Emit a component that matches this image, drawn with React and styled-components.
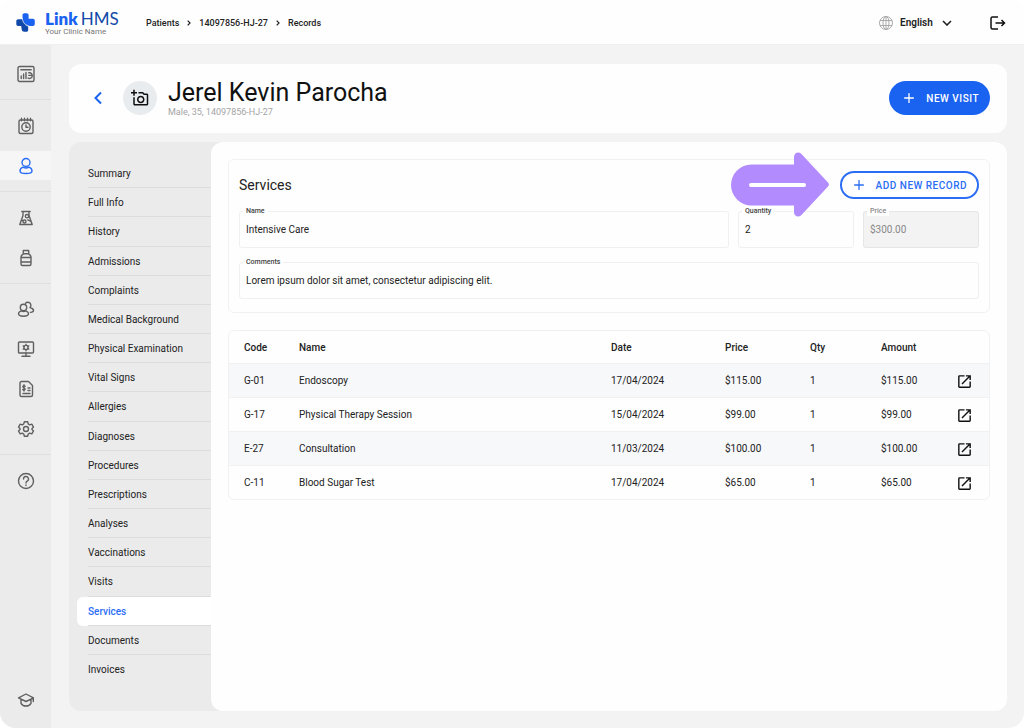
import { useState } from "react";
import styled, { createGlobalStyle } from "styled-components";
import { MdOpenInNew, MdOutlineAddAPhoto } from "react-icons/md";

const GlobalStyle = createGlobalStyle`
  * {
    box-sizing: border-box;
  }

  body {
    margin: 0;
    background: #fff;
    color: #222;
    font-family: Roboto, "Liberation Sans", sans-serif;
    font-size: 10px;
    line-height: 14px;
  }

  button, input, select {
    font-family: inherit;
  }
`;

const Page = styled.div`
  display: flex;
  flex-direction: column;
  min-height: 100vh;
  background: #f3f3f3;
  border-radius: 16px;
  overflow: hidden;
`;

// Top bar
const TopBar = styled.header`
  display: flex;
  align-items: center;
  height: 45px;
  padding: 1px 18px 0 16px;
  background: #fefefe;
  border-bottom: 1px solid #f0f0f0;
`;

const Logo = styled.a`
  display: flex;
  align-items: center;
  gap: 10px;
  width: 130px;
  color: inherit;
  text-decoration: none;
`;

const LogoText = styled.span`
  display: flex;
  flex-direction: column;
`;

const Brand = styled.span`
  display: flex;
  gap: 3px;
  color: #1149a8;
  font-family: Lato, sans-serif;
  font-size: 17px;
  line-height: 18px;

  b {
    color: #1a62f0;
    font-weight: 800;
  }
`;

const Tagline = styled.small`
  color: #777;
  font-size: 8px;
  line-height: 8px;
`;

const Breadcrumbs = styled.nav`
  display: flex;
  flex: 1;
  align-items: center;
  gap: 8px;

  a {
    color: #222;
    font-size: 9px;
    font-weight: 500;
    text-decoration: none;
  }
`;

const Language = styled.label`
  display: flex;
  align-items: center;
  gap: 7px;
  margin-right: 38px;
`;

const LanguageSelect = styled.select`
  appearance: none;
  width: 35px;
  padding: 0;
  border: none;
  background: none;
  color: #222;
  font-size: 10px;
  font-weight: 600;
`;

const IconButton = styled.button`
  display: flex;
  align-items: center;
  justify-content: center;
  padding: 0;
  border: none;
  background: none;
  color: ${(props) => props.$color || "#111"};
  cursor: pointer;
`;

// Left icon bar
const Shell = styled.div`
  display: flex;
  flex: 1;
`;

const SideBar = styled.nav`
  display: flex;
  flex-direction: column;
  flex-shrink: 0;
  width: 51px;
  padding-bottom: 12px;
  background: #ebebeb;
`;

const SideGroup = styled.div`
  margin-top: ${(props) => (props.$bottom ? "auto" : "0")};
  padding: ${(props) => props.$pad || "6px 0"};
  border-bottom: ${(props) => (props.$last ? "none" : "1px solid #dfdfdf")};
`;

const SideLink = styled.a`
  display: flex;
  align-items: center;
  justify-content: center;
  height: ${(props) => props.$height || 40}px;
  margin-top: ${(props) => (props.$active ? 5 : 0)}px;
  background: ${(props) => (props.$active ? "#f6f6f6" : "none")};
  color: ${(props) => (props.$active ? "#2b6ef5" : "#606060")};
`;

const Main = styled.main`
  display: flex;
  flex: 1;
  flex-direction: column;
  gap: 9px;
  min-width: 0;
  padding: 19px 17px 17px 18px;
`;

// Patient header
const PatientCard = styled.section`
  display: flex;
  align-items: center;
  height: 69px;
  padding: 0 17px 1px 24px;
  background: #fefefe;
  border-radius: 12px;
`;

const Avatar = styled.button`
  display: flex;
  align-items: center;
  justify-content: center;
  width: 34px;
  height: 34px;
  margin: 0 11px 0 20px;
  padding: 0;
  border: none;
  border-radius: 50%;
  background: #e9ecef;
  color: #111;
`;

const PatientInfo = styled.div`
  flex: 1;
`;

const PatientName = styled.h1`
  margin: 0;
  color: #111;
  font-size: 25px;
  font-weight: 400;
  line-height: 28px;
`;

const PatientMeta = styled.p`
  margin: 0;
  color: #a5a5a5;
  font-size: 9px;
  line-height: 10px;
`;

const Button = styled.button`
  display: flex;
  align-items: center;
  justify-content: center;
  gap: 12px;
  height: ${(props) => (props.$outlined ? 28 : 34)}px;
  padding: ${(props) => (props.$outlined ? "0 10px 0 12px" : "0 11px 0 15px")};
  border: ${(props) => (props.$outlined ? "2px solid #2b6ef5" : "none")};
  border-radius: 17px;
  background: ${(props) => (props.$outlined ? "#fff" : "#1a62f0")};
  color: ${(props) => (props.$outlined ? "#2b6ef5" : "#fff")};
  font-size: 10px;
  font-weight: 500;
  letter-spacing: 0.5px;
  cursor: pointer;
`;

// Records area
const Record = styled.div`
  display: flex;
  flex: 1;
  background: #ebebeb;
  border-radius: 12px;
`;

const Menu = styled.nav`
  display: flex;
  flex-direction: column;
  width: 142px;
  padding: 17px 0 27px 8px;
`;

const MenuItem = styled.a`
  display: flex;
  flex: 1;
  padding-left: 11px;
  background: ${(props) => (props.$active ? "#fff" : "none")};
  border-radius: 6px 0 0 6px;
  color: ${(props) => (props.$active ? "#2b6ef5" : "#222")};
  font-weight: ${(props) => (props.$active ? 500 : 400)};
  text-decoration: none;

  span {
    display: flex;
    flex: 1;
    align-items: center;
    padding-top: 2px;
    border-bottom: 1px solid #dcdcdc;
  }

  &:last-child span {
    border-color: transparent;
  }
`;

const Content = styled.div`
  display: flex;
  flex: 1;
  flex-direction: column;
  gap: 17px;
  min-width: 0;
  padding: 17px;
  background: #fefefe;
  border-radius: 12px;
`;

const FormCard = styled.form`
  position: relative;
  padding: 11px 10px 13px;
  border: 1px solid #f1f1f1;
  border-radius: 6px;
`;

const FormHeader = styled.div`
  display: flex;
  align-items: center;
  justify-content: space-between;
  margin-bottom: 7px;
`;

const Title = styled.h2`
  margin: 0;
  font-size: 14px;
  font-weight: 400;
`;

const Fields = styled.div`
  display: grid;
  grid-template-columns: 1fr 116px 116px;
  gap: 9px;
`;

const Field = styled.fieldset`
  grid-column: ${(props) => (props.$wide ? "1 / -1" : "auto")};
  min-width: 0;
  height: 42px;
  margin: 0;
  padding: 0 6px;
  border: 1px solid ${(props) => (props.disabled ? "#e6e6e6" : "#f0f0f0")};
  border-radius: 3px;
  background: ${(props) => (props.disabled ? "#f3f3f3" : "none")};

  legend {
    margin-left: -3px;
    padding: 1px 3px 0;
    background: #fefefe;
    color: ${(props) => (props.disabled ? "#888" : "#444")};
    font-size: 7px;
    font-weight: 500;
    line-height: 9px;
  }

  input {
    display: block;
    width: 100%;
    height: 26px;
    padding: 0;
    border: none;
    outline: none;
    background: none;
    color: ${(props) => (props.disabled ? "#888" : "#222")};
    font-size: 10px;
  }
`;

const Pointer = styled.svg`
  position: absolute;
  top: -8px;
  right: 160px;
`;

const TableCard = styled.div`
  overflow: hidden;
  border: 1px solid #f1f1f1;
  border-radius: 6px;
`;

const Table = styled.table`
  width: 100%;
  table-layout: fixed;
  border-collapse: collapse;
  text-align: left;

  th, td {
    height: 34px;
    padding: 2px 0 0;
  }

  th {
    height: 32px;
    font-weight: 500;
  }

  th:first-child, td:first-child {
    padding-left: 15px;
  }

  tbody tr:nth-child(odd) {
    background: #f7f8fa;
  }

  tbody tr {
    border-top: 1px solid #f1f1f1;
  }
`;

const Col = styled.col`
  width: ${(props) => props.$width}px;
`;

const menu = [
  "Summary",
  "Full Info",
  "History",
  "Admissions",
  "Complaints",
  "Medical Background",
  "Physical Examination",
  "Vital Signs",
  "Allergies",
  "Diagnoses",
  "Procedures",
  "Prescriptions",
  "Analyses",
  "Vaccinations",
  "Visits",
  "Services",
  "Documents",
  "Invoices",
];

const records = [
  { code: "G-01", name: "Endoscopy", date: "17/04/2024", price: "$115.00", qty: 1 },
  { code: "G-17", name: "Physical Therapy Session", date: "15/04/2024", price: "$99.00", qty: 1 },
  { code: "E-27", name: "Consultation", date: "11/03/2024", price: "$100.00", qty: 1 },
  { code: "C-11", name: "Blood Sugar Test", date: "17/04/2024", price: "$65.00", qty: 1 },
];

// Line icons, 18x18
const icons = {
  dashboard: (
    <>
      <rect x="1" y="1.5" width="16" height="15" rx="1.5" />
      <path d="M3.8 4.8h10.400M4.200 13.500v-2.500M6.600 13.500V9M9 13.500V7.500M11.800 7.800a2.900 2.900 0 1 1-.8 5.400M14.200 10.400h-2.400" />
    </>
  ),
  schedule: (
    <>
      <rect x="2" y="3" width="14" height="13.5" rx="1.5" />
      <path d="M4.5 1.200v2.500M7.500 1.200v2.500M10.500 1.200v2.500M13.500 1.200v2.500M9 8v2.300h2" />
      <circle cx="9" cy="10" r="4.200" />
    </>
  ),
  patient: (
    <>
      <circle cx="9" cy="5.500" r="4" />
      <path d="M6 10.200c-2 .8-3 2.200-3 3.700 0 1.800 2.500 2.600 6 2.600s6-.8 6-2.600c0-1.500-1-2.900-3-3.700-1.700 1-4.300 1-6 0z" />
    </>
  ),
  lab: (
    <>
      <path d="M4.800 2.500h8.400M6 2.500v4L2.800 15.500h12.400L12 6.500v-4M4.500 11.500h1.500M10.800 10.800l3.200 1.700" />
      <circle cx="10" cy="7.200" r="1.700" />
      <circle cx="7.500" cy="12.500" r="1.500" />
    </>
  ),
  pharmacy: (
    <path d="M6.300 1.500h5.400v3.300H6.300zM6.500 4.800C5 5.700 4 6.600 4 8v7c0 1 .5 1.500 1.500 1.500h7c1 0 1.500-.5 1.500-1.500V8c0-1.400-1-2.300-2.500-3.200M4 8.500h10M4 13h10" />
  ),
  staff: (
    <>
      <circle cx="6.500" cy="7.500" r="3.200" />
      <path d="M4.300 10.800c-1.800.6-2.800 1.700-2.800 3 0 1.700 2 2.400 5 2.400s5-.7 5-2.400c0-1.300-1-2.400-2.800-3-1.200.7-3.200.7-4.400 0zM8.500 3.200A3.100 3.100 0 1 1 13 7.500c2 .6 3.500 1.600 3.500 3 0 1-1 1.700-3 1.900" />
    </>
  ),
  monitor: (
    <>
      <rect x="1.500" y="2" width="15" height="11" rx="1" />
      <circle cx="9" cy="7.500" r="2.100" />
      <path d="M9 4.300v1M9 9.700v1M6.200 5.900l.9.500M10.900 8.600l.9.500M6.200 9.100l.9-.5M10.900 6.400l.9-.5M9 13v3M5 16.300h8" />
    </>
  ),
  invoice: (
    <>
      <path d="M4.500 1.500h7l4 4V15c0 1-.5 1.500-1.500 1.500H4.500C3.500 16.500 3 16 3 15V3c0-1 .5-1.500 1.500-1.500z" />
      <path d="M8.200 6.200C6.500 5 5 6.500 6.500 7.600l1 .6c1.500 1.200 0 2.500-1.700 1.400M7 4.800v6.200M11 8h2M11 10.500h2M6 13.500h7" />
    </>
  ),
  settings: (
    <>
      <circle cx="9" cy="9" r="2.500" />
      <path d="M7.300 1.800h3.400l.5 2.100 1.500.9 2.100-.6 1.700 2.900L15 8.600v.8l1.500 1.500-1.700 2.900-2.100-.6-1.500.9-.5 2.100H7.300l-.5-2.100-1.500-.9-2.100.6-1.700-2.900L3 9.400v-.8L1.500 7.100l1.700-2.900 2.100.6 1.500-.9z" />
    </>
  ),
  help: (
    <>
      <circle cx="9" cy="9" r="7.500" />
      <path d="M6.500 7a2.500 2.500 0 1 1 3.700 2.200c-.9.500-1.200.9-1.200 1.800M9 13v.5" />
    </>
  ),
  academy: (
    <path d="M9 3 1.500 6.800 9 10.500l7.500-3.700zM4 8.500v3.800C5 14.200 7 15 9 15s4-.8 5-2.700V8.500M16.300 7v3.500" />
  ),
};

function Icon({ name }) {
  return (
    <svg width="18" height="18" viewBox="0 0 18 18" fill="none" stroke="currentColor" strokeWidth="1.4" strokeLinecap="round" strokeLinejoin="round" aria-hidden="true">
      {icons[name]}
    </svg>
  );
}

function Plus({ size = 10 }) {
  return (
    <svg width={size} height={size} viewBox="0 0 10 10" stroke="currentColor" strokeWidth="1.3" strokeLinecap="round" aria-hidden="true">
      <path d="M5 .6v8.800M.6 5h8.800" />
    </svg>
  );
}

function Chevron({ d, width, height, stroke = 1.2 }) {
  return (
    <svg width={width} height={height} viewBox={`0 0 ${width} ${height}`} fill="none" stroke="currentColor" strokeWidth={stroke} aria-hidden="true">
      <path d={d} />
    </svg>
  );
}

function LogoMark() {
  return (
    <svg width="19" height="19" viewBox="0 0 19 19" aria-hidden="true">
      <path fill="#1149a8" d="M2.200 6.200H7c1 4 3 6 5.200 6.800V17c0 1-.7 1.800-1.800 1.800H8.300c-1.500 0-2.300-.8-2.600-2.200L5.200 13H2.200C1 13 .3 12.200.3 11V8c0-1 .8-1.800 1.900-1.800z" />
      <path fill="#1a62f0" d="M8.300.2h2.400c1.100 0 1.900.8 1.900 1.900V5.800h4.200c1.200 0 2 .8 2 1.900V11c0 1.200-.8 2-2 2H14C9.800 12.400 6.500 9 6.500 4.500V2c0-1.100.8-1.800 1.800-1.800z" />
      <path fill="none" stroke="#fefefe" strokeWidth=".7" d="M6.300 5c.3 4.500 3 7.700 7.200 8.400" />
    </svg>
  );
}

function SideItem({ icon, label, ...rest }) {
  return (
    <SideLink href="#" aria-label={label} {...rest}>
      <Icon name={icon} />
    </SideLink>
  );
}

function TextField({ label, value, ...rest }) {
  return (
    <Field {...rest}>
      <legend>{label}</legend>
      <input aria-label={label} defaultValue={value} />
    </Field>
  );
}

function App() {
  const [active, setActive] = useState("Services");

  return (
    <Page>
      <GlobalStyle />
      <TopBar>
        <Logo href="#">
          <LogoMark />
          <LogoText>
            <Brand><b>Link</b>HMS</Brand>
            <Tagline>Your Clinic Name</Tagline>
          </LogoText>
        </Logo>
        <Breadcrumbs aria-label="Breadcrumb">
          <a href="#">Patients</a>
          <Chevron width={4} height={6} d="M.7.7 3 3 .7 5.300" />
          <a href="#">14097856-HJ-27</a>
          <Chevron width={4} height={6} d="M.7.7 3 3 .7 5.300" />
          <a href="#">Records</a>
        </Breadcrumbs>
        <Language>
          <svg width="14" height="14" viewBox="0 0 14 14" fill="none" stroke="#aaa" aria-hidden="true">
            <circle cx="7" cy="7" r="6.500" />
            <ellipse cx="7" cy="7" rx="3" ry="6.500" />
            <path d="M7 .5v13M1 4.500h12M1 9.500h12" />
          </svg>
          <LanguageSelect aria-label="Language">
            <option>English</option>
          </LanguageSelect>
          <Chevron width={10} height={6} d="M1 1l4 4 4-4" stroke={1.6} />
        </Language>
        <IconButton aria-label="Log out">
          <svg width="16" height="14" viewBox="0 0 16 14" fill="none" stroke="currentColor" strokeWidth="1.500" aria-hidden="true">
            <path d="M8 1H2.500c-1 0-1.500.5-1.500 1.500v9c0 1 .5 1.500 1.500 1.500H8M5.500 7H14M11.500 4l3 3-3 3" />
          </svg>
        </IconButton>
      </TopBar>

      <Shell>
        <SideBar>
          <SideGroup $pad="9px 0 5px">
            <SideItem icon="dashboard" label="Dashboard" />
          </SideGroup>
          <SideGroup $pad="6px 0 11px">
            <SideItem icon="schedule" label="Schedule" />
            <SideItem icon="patient" label="Patients" $height={29} $active />
          </SideGroup>
          <SideGroup $pad="6px 0 5px">
            <SideItem icon="lab" label="Laboratory" />
            <SideItem icon="pharmacy" label="Pharmacy" />
          </SideGroup>
          <SideGroup $pad="5px 0 5px">
            <SideItem icon="staff" label="Staff" />
            <SideItem icon="monitor" label="Equipment" />
            <SideItem icon="invoice" label="Billing" />
            <SideItem icon="settings" label="Settings" />
          </SideGroup>
          <SideGroup $last>
            <SideItem icon="help" label="Help" />
          </SideGroup>
          <SideGroup $last $bottom $pad="0">
            <SideItem icon="academy" label="Academy" $height={32} />
          </SideGroup>
        </SideBar>

        <Main>
          <PatientCard>
            <IconButton aria-label="Back" $color="#1a62f0">
              <Chevron width={10} height={14} d="M8 1.500 2.500 7 8 12.500" stroke={2} />
            </IconButton>
            <Avatar aria-label="Add photo"><MdOutlineAddAPhoto size={18} /></Avatar>
            <PatientInfo>
              <PatientName>Jerel Kevin Parocha</PatientName>
              <PatientMeta>Male, 35, 14097856-HJ-27</PatientMeta>
            </PatientInfo>
            <Button><Plus />NEW VISIT</Button>
          </PatientCard>

          <Record>
            <Menu aria-label="Patient record">
              {menu.map((item) => (
                <MenuItem key={item} href="#" $active={item === active} onClick={() => setActive(item)}>
                  <span>{item}</span>
                </MenuItem>
              ))}
            </Menu>

            <Content>
              <FormCard>
                <FormHeader>
                  <Title>Services</Title>
                  <Button type="button" $outlined><Plus />ADD NEW RECORD</Button>
                </FormHeader>
                <Fields>
                  <TextField label="Name" value="Intensive Care" />
                  <TextField label="Quantity" value="2" />
                  <TextField label="Price" value="$300.00" disabled />
                  <TextField label="Comments" value="Lorem ipsum dolor sit amet, consectetur adipiscing elit." $wide />
                </Fields>
                <Pointer width="98" height="66" viewBox="0 0 98 66" aria-hidden="true">
                  <path fill="#b28cff" d="M20.500 12.500H63V5c0-4 4-6 7-3.500l27 29c1.300 1.500 1.300 2.500 0 4l-27 29c-3 2.500-7 .5-7-3.500v-6.500H20.500a20.500 20.500 0 0 1 0-41z" />
                  <path stroke="#fff" strokeWidth="4" strokeLinecap="round" d="M20 33h53" />
                </Pointer>
              </FormCard>

              <TableCard>
                <Table>
                  <colgroup>
                    <Col $width={70} />
                    <col />
                    <Col $width={114} />
                    <Col $width={85} />
                    <Col $width={71} />
                    <Col $width={75} />
                    <Col $width={33} />
                  </colgroup>
                  <thead>
                    <tr>
                      <th>Code</th>
                      <th>Name</th>
                      <th>Date</th>
                      <th>Price</th>
                      <th>Qty</th>
                      <th>Amount</th>
                      <th />
                    </tr>
                  </thead>
                  <tbody>
                    {records.map((row) => (
                      <tr key={row.code}>
                        <td>{row.code}</td>
                        <td>{row.name}</td>
                        <td>{row.date}</td>
                        <td>{row.price}</td>
                        <td>{row.qty}</td>
                        <td>{row.price}</td>
                        <td>
                          <IconButton aria-label={`Open ${row.name}`}><MdOpenInNew size={17} /></IconButton>
                        </td>
                      </tr>
                    ))}
                  </tbody>
                </Table>
              </TableCard>
            </Content>
          </Record>
        </Main>
      </Shell>
    </Page>
  );
}

export default App;
